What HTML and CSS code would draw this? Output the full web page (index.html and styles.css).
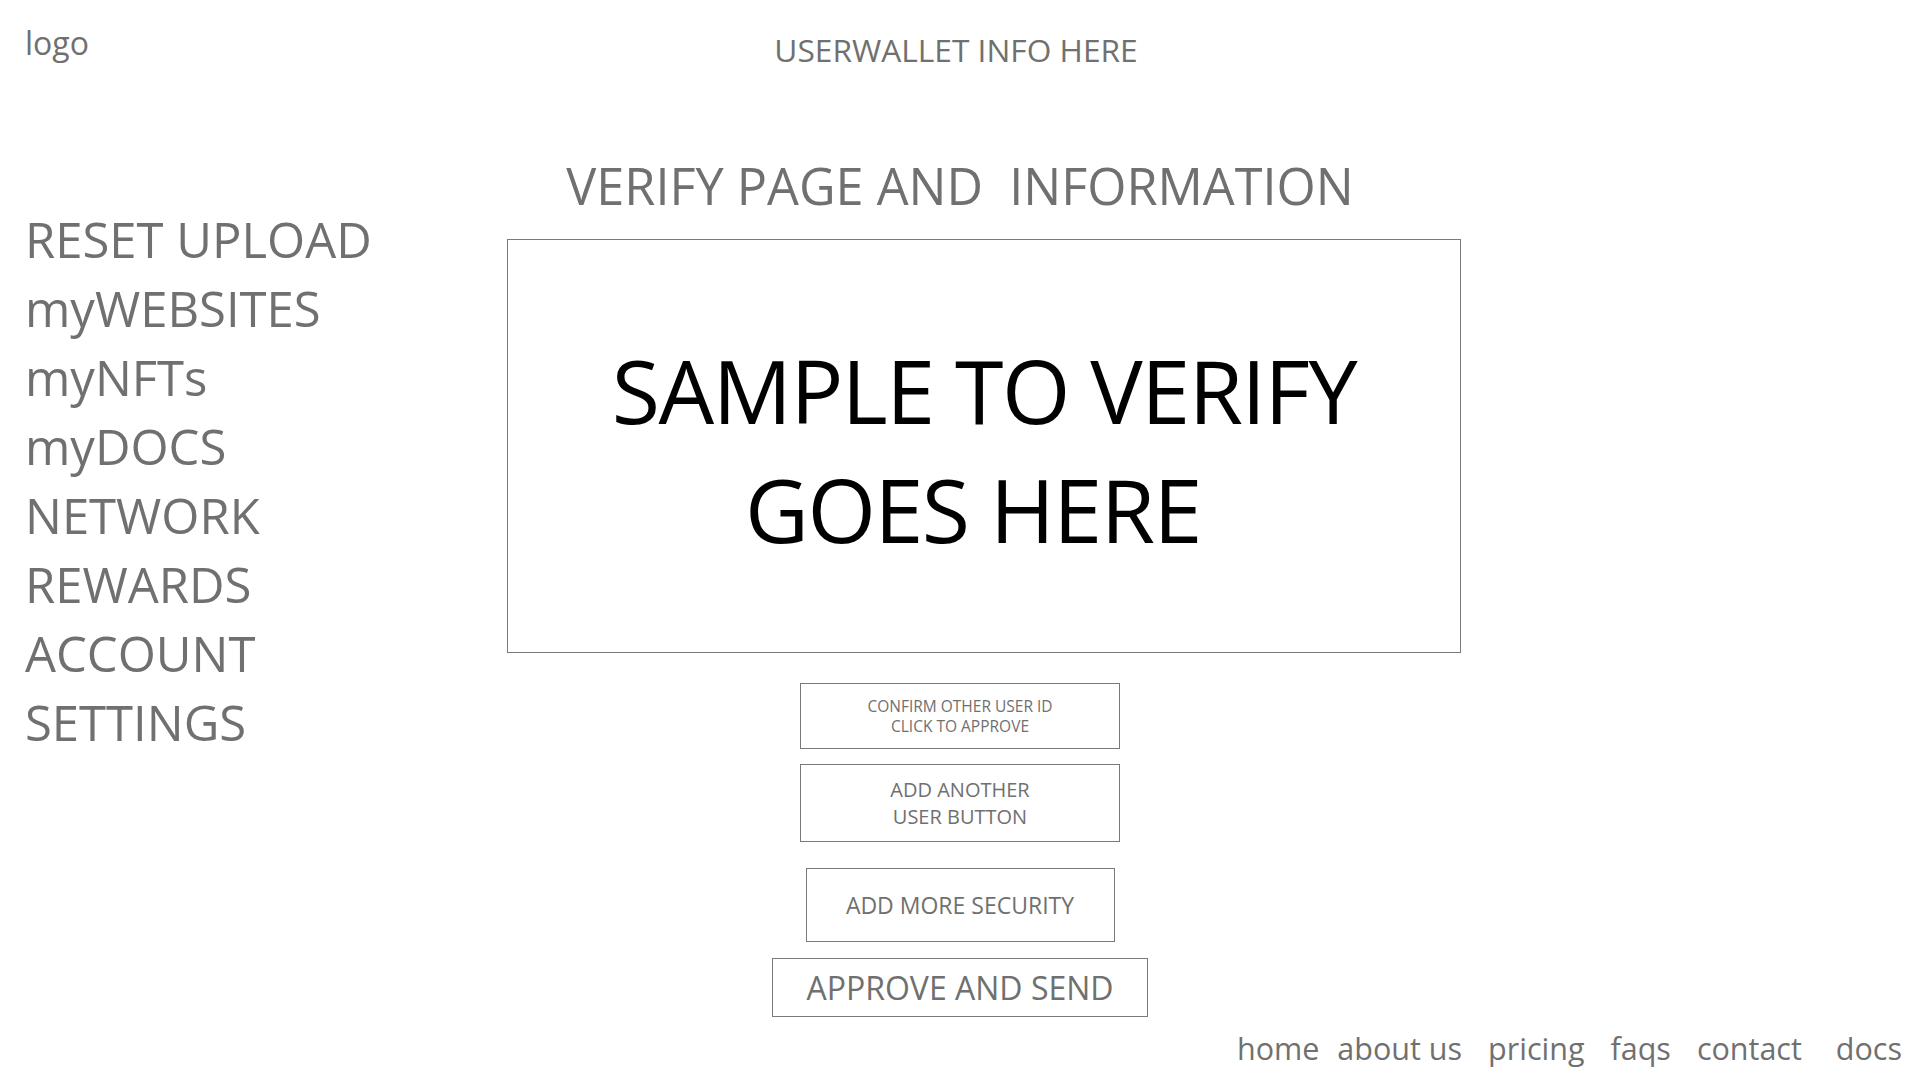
FILE: index.html
```html
<!DOCTYPE html>
<html lang="en">
<head>
<meta charset="utf-8">
<title>Verify Page</title>
<link rel="stylesheet" href="styles.css">
</head>
<body>
<div class="page">
  <header class="topbar">
    <div class="logo">logo</div>
    <div class="wallet">USERWALLET INFO HERE</div>
    <div></div>
  </header>
  <div class="layout">
    <nav class="sidebar">
      <a class="nav-item">RESET UPLOAD</a>
      <a class="nav-item">myWEBSITES</a>
      <a class="nav-item">myNFTs</a>
      <a class="nav-item">myDOCS</a>
      <a class="nav-item">NETWORK</a>
      <a class="nav-item">REWARDS</a>
      <a class="nav-item">ACCOUNT</a>
      <a class="nav-item">SETTINGS</a>
    </nav>
    <main class="content">
      <div class="centered">
        <h1 class="title">VERIFY PAGE AND&nbsp; INFORMATION</h1>
      </div>
      <section class="sample-box">
        <p class="sample-text">SAMPLE TO VERIFY<br><span class="trail">GOES HERE</span></p>
      </section>
      <div class="centered actions">
        <button class="btn btn-confirm">CONFIRM OTHER USER ID<br>CLICK TO APPROVE</button>
        <button class="btn btn-add">ADD ANOTHER<br>USER BUTTON</button>
        <button class="btn btn-security">ADD MORE SECURITY</button>
        <button class="btn btn-approve">APPROVE AND SEND</button>
      </div>
    </main>
  </div>
  <footer class="footer">
    <a class="foot-link">home</a>
    <a class="foot-link foot-about">about us</a>
    <a class="foot-link">pricing</a>
    <a class="foot-link">faqs</a>
    <a class="foot-link">contact</a>
    <a class="foot-link foot-docs">docs</a>
  </footer>
</div>
</body>
</html>
```

FILE: styles.css
```css
* { box-sizing: border-box; }

html, body {
  margin: 0;
  padding: 0;
  background: #ffffff;
}

body {
  font-family: "Open Sans", "Noto Sans", sans-serif;
  color: #707070;
}

.page {
  width: 1920px;
  height: 1080px;
  overflow: hidden;
}

/* header */
.topbar {
  display: grid;
  grid-template-columns: 1fr auto 1fr;
  align-items: start;
  padding-top: 21px;
}

.logo {
  font-size: 32px;
  padding-left: 25px;
  line-height: normal;
}

.wallet {
  font-size: 31.7px;
  margin-top: 7px;
  margin-right: 8px;
  line-height: normal;
}

/* main layout */
.layout {
  display: grid;
  grid-template-columns: 507px 954px;
}

.sidebar {
  display: flex;
  flex-direction: column;
  padding-top: 134px;
  padding-left: 25px;
}

.nav-item {
  font-size: 49px;
  line-height: 69px;
  color: #707070;
  white-space: nowrap;
}

.content {
  display: flex;
  flex-direction: column;
}

.centered {
  display: flex;
  flex-direction: column;
  align-items: center;
  padding-right: 48px;
}

.title {
  margin: 80px 0 0 0;
  font-size: 50.4px;
  font-weight: 400;
  line-height: normal;
  white-space: nowrap;
  color: #707070;
}

.sample-box {
  margin-top: 19px;
  height: 414px;
  border: 1px solid #7a7a7a;
  padding-top: 91px;
}

.sample-text {
  margin: 0;
  text-align: center;
  font-size: 88px;
  line-height: 119px;
  color: #000000;
  letter-spacing: -1.5px;
}

.trail {
  padding-right: 22px;
}

/* buttons */
.actions {
  margin-top: 30px;
}

.btn {
  display: flex;
  align-items: center;
  justify-content: center;
  text-align: center;
  background: #ffffff;
  border: 1px solid #7a7a7a;
  border-radius: 0;
  color: #707070;
  font-family: "Open Sans", "Noto Sans", sans-serif;
  padding: 0;
}

.btn-confirm {
  width: 320px;
  height: 66px;
  font-size: 15.5px;
  line-height: 20px;
}

.btn-add {
  width: 320px;
  height: 78px;
  margin-top: 15px;
  font-size: 20px;
  line-height: 27px;
}

.btn-security {
  width: 309px;
  height: 74px;
  margin-top: 26px;
  font-size: 23px;
  line-height: normal;
}

.btn-approve {
  width: 376px;
  height: 59px;
  margin-top: 16px;
  font-size: 32px;
  line-height: normal;
}

/* footer */
.footer {
  display: flex;
  justify-content: flex-end;
  padding-right: 18px;
  margin-top: 10px;
}

.foot-link {
  font-size: 30.5px;
  line-height: normal;
  color: #707070;
}

.foot-link + .foot-link {
  margin-left: 26px;
}

.foot-link.foot-about {
  margin-left: 18px;
}

.foot-link.foot-docs {
  margin-left: 34px;
}
```
